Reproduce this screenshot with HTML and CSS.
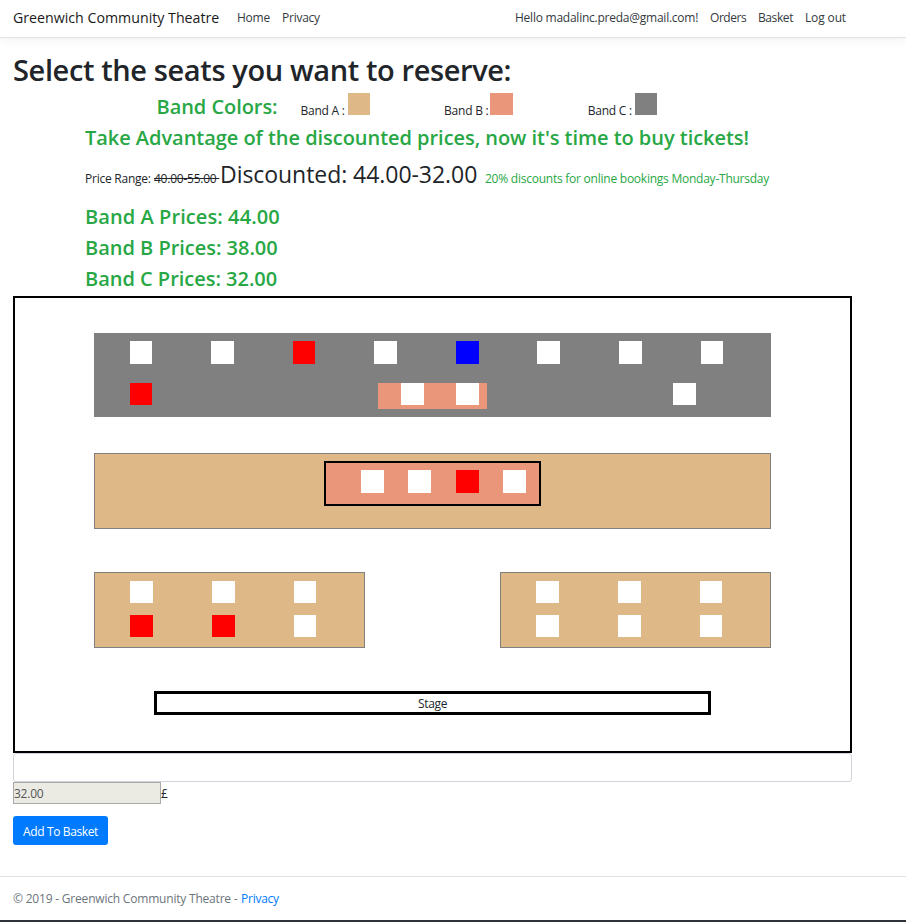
FILE: index.html
```html
<!DOCTYPE html>
<html lang="en">
<head>
<meta charset="utf-8">
<title>Greenwich Community Theatre</title>
<link rel="stylesheet" href="styles.css">
</head>
<body>
<header class="navbar">
  <a class="brand">Greenwich Community Theatre</a>
  <nav class="nav nav-main"><a class="home">Home</a><a>Privacy</a></nav>
  <nav class="nav nav-user"><a class="hello">Hello madalinc.preda@gmail.com!</a><a class="orders">Orders</a><a class="basket">Basket</a><a class="logout">Log out</a></nav>
</header>

<main class="container">
  <h1>Select the seats you want to reserve:</h1>
  <div class="legend">
    <h4 class="legend-title">Band Colors:</h4>
    <div class="legend-item"><span>Band A :</span><i class="swatch band-a"></i></div>
    <div class="legend-item"><span>Band B :</span><i class="swatch band-b"></i></div>
    <div class="legend-item"><span>Band C :</span><i class="swatch band-c"></i></div>
  </div>
  <section class="prices">
    <h4 class="promo">Take Advantage of the discounted prices, now it's time to buy tickets!</h4>
    <p class="range"><span class="label">Price Range:</span><s>40.00-55.00 </s><span class="discounted">Discounted: 44.00-32.00</span><span class="note">20% discounts for online bookings Monday-Thursday</span></p>
    <h4>Band A Prices: 44.00</h4>
    <h4 class="narrow">Band B Prices: 38.00</h4>
    <h4 class="narrow">Band C Prices: 32.00</h4>
  </section>

  <section class="theatre">
    <div class="block back">
      <div class="row-back">
        <i class="seat"></i><i class="seat"></i><i class="seat taken"></i><i class="seat"></i><i class="seat chosen"></i><i class="seat"></i><i class="seat"></i><i class="seat"></i>
      </div>
      <div class="row-mixed">
        <i class="seat taken"></i>
        <div class="pair"><i class="seat"></i><i class="seat"></i></div>
        <i class="seat"></i>
      </div>
    </div>
    <div class="block middle">
      <div class="centre"><i class="seat"></i><i class="seat"></i><i class="seat taken"></i><i class="seat"></i></div>
    </div>
    <div class="front">
      <div class="block stalls">
        <i class="seat"></i><i class="seat"></i><i class="seat"></i>
        <i class="seat taken"></i><i class="seat taken"></i><i class="seat"></i>
      </div>
      <div class="block stalls">
        <i class="seat"></i><i class="seat"></i><i class="seat"></i>
        <i class="seat"></i><i class="seat"></i><i class="seat"></i>
      </div>
    </div>
    <div class="stage">Stage</div>
  </section>

  <div class="field"></div>
  <div class="total"><div class="amount">32.00</div><span>£</span></div>
  <button class="btn" type="button">Add To Basket</button>
</main>

<footer class="footer"><span>© 2019 - Greenwich Community Theatre -</span><a>Privacy</a></footer>
<div class="edge"></div>
</body>
</html>
```
FILE: styles.css
```css
* { box-sizing: border-box; }

body {
  margin: 0;
  height: 922px;
  display: flex;
  flex-direction: column;
  overflow: hidden;
  background: #fff;
  color: #212529;
  font: 12px/18px "Open Sans", "Segoe UI", sans-serif;
  letter-spacing: -0.24px;
  white-space: nowrap;
}

h1, h4, p { margin: 0; }

.navbar {
  flex: none;
  display: flex;
  align-items: center;
  height: 38px;
  padding: 0 60px 2px 13px;
  border-bottom: 1px solid #dee2e6;
  box-shadow: 0 3px 9px rgba(0, 0, 0, .05);
}
.brand { width: 224px; font-size: 14.2px; letter-spacing: 0; color: #1a1a1a; }
.nav { display: flex; color: #343a40; }
.home { width: 45px; }
.nav-user { margin-left: auto; }
.hello { width: 195px; }
.orders { width: 48px; letter-spacing: -0.45px; }
.basket { width: 47px; letter-spacing: -0.4px; }
.logout { width: 41px; letter-spacing: -0.14px; }

.container { flex: none; width: 839px; margin-left: 13px; }

h1 {
  margin: 14px 0 3px;
  font-size: 29px;
  line-height: 36px;
  font-weight: 600;
  letter-spacing: -0.38px;
}
h4 {
  color: #28a745;
  font-size: 20px;
  line-height: 31px;
  font-weight: 600;
  letter-spacing: 0.08px;
}
.narrow { letter-spacing: -0.02px; }

.legend { display: flex; height: 30px; padding-left: 143.5px; }
.legend-title { width: 144px; line-height: 32px; letter-spacing: -0.05px; }
.legend-item { display: flex; align-items: flex-start; gap: 3px; width: 143.6px; padding-top: 2px; }
.legend-item span { padding-top: 9px; }
.swatch { width: 22px; height: 22px; }
.band-a { background: #deb887; }
.band-b { width: 23px; margin-left: -1px; background: #e9967a; }
.band-c { background: #808080; }

.prices { padding-left: 72px; }
.promo { line-height: 33px; height: 32px; letter-spacing: -0.04px; }
.range { display: flex; align-items: baseline; height: 48px; padding-top: 3px; }
.label { width: 69px; }
s { width: 66px; white-space: pre; }
.discounted { width: 265px; font-size: 23px; line-height: 36px; letter-spacing: -0.05px; }
.note { color: #28a745; }

.theatre {
  display: flex;
  flex-direction: column;
  height: 457px;
  margin-top: 2px;
  padding: 35px 79px 0;
  border: 2px solid #000;
}
.block { border: 1px solid #808080; background: #deb887; }
.seat { width: 23px; height: 23px; background: #fff; }
.seat.taken { background: #f00; }
.seat.chosen { background: #00f; }

.back { height: 84px; padding: 7px 0 0 35px; background: #808080; }
.row-back { display: grid; grid-template-columns: 22px 23px 22px 23px 22px 23px 23px 22px; column-gap: 59px; }
.row-back .seat:nth-child(3), .row-back .seat:first-child, .row-back .seat:last-child { width: 22px; }
.row-mixed { display: flex; margin-top: 19px; }
.row-mixed .seat { height: 22px; }
.row-mixed > .seat:first-child { width: 22px; }
.pair { display: flex; gap: 32px; width: 109px; height: 26px; margin: 0 186px 0 226px; padding-left: 23px; background: #e9967a; }

.middle { display: flex; justify-content: center; height: 76px; margin-top: 36px; padding-top: 7px; }
.centre { display: grid; grid-template-columns: 23px 24px 23px 23px; column-gap: 24px; width: 217px; height: 45px; padding: 7px 0 0 35px; border: 2px solid #000; background: #e9967a; }

.front { display: flex; justify-content: space-between; margin-top: 43px; }
.stalls { display: grid; grid-template-columns: 23px 23px 22px; grid-auto-rows: 22px; gap: 12px 59px; width: 271px; height: 76px; padding: 8px 0 0 35px; }
.stalls .seat { width: auto; height: auto; }

.stage { align-self: center; width: 557px; height: 24px; margin-top: 43px; border: 3px solid #000; line-height: 19px; text-align: center; letter-spacing: -0.35px; }

.field { height: 29px; border: 1px solid #ced4da; border-radius: 3px; }
.total { display: flex; height: 22px; line-height: 24px; }
.amount { width: 148px; height: 22px; border: 1px solid #a9a9a9; background: #ebebe4; color: #545454; line-height: 21px; }
.btn {
  display: block;
  width: 95px;
  height: 29px;
  margin-top: 12px;
  padding: 2px 0 0;
  border: 0;
  border-radius: 3px;
  background: #007bff;
  color: #fff;
  font: inherit;
  letter-spacing: -0.37px;
}

.footer { flex: none; display: flex; height: 44px; margin-top: 31px; padding: 0 13px; border-top: 1px solid #dee2e6; color: #6c757d; line-height: 43px; }
.footer span { width: 228px; letter-spacing: -0.2px; }
.footer a { color: #007bff; }
.edge { flex: none; height: 2px; background: #2d3238; }
```
